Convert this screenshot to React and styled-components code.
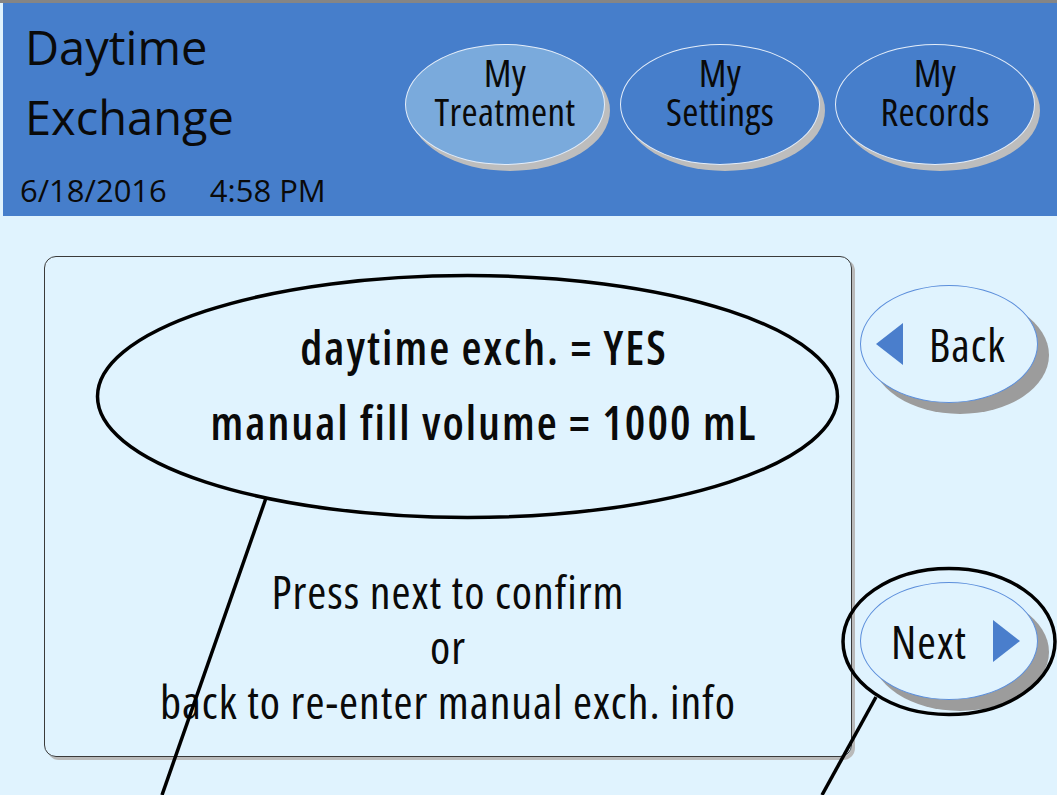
import React from 'react';
import styled, { createGlobalStyle } from 'styled-components';

const GlobalStyle = createGlobalStyle`
  html, body {
    margin: 0;
    padding: 0;
    background: #e0f3fe;
  }
  body {
    font-family: "Open Sans", "Noto Sans", sans-serif;
    font-stretch: 75%;
    color: #0a0a0a;
  }
`;

const Screen = styled.div`
  position: relative;
  width: 1057px;
  height: 795px;
  overflow: hidden;
  box-sizing: border-box;
  border-top: 3px solid #858585;
  background: #e0f3fe;
`;

const Header = styled.header`
  display: flex;
  align-items: flex-start;
  height: 213px;
  margin-left: 3px;
  padding: 0 22px;
  box-sizing: border-box;
  background: #467ecb;
`;

const TitleBlock = styled.div`
  display: flex;
  flex-direction: column;
  padding-top: 9px;
`;

const Title = styled.h1`
  margin: 0;
  font-size: 47px;
  line-height: 70px;
  font-weight: normal;
  font-stretch: 100%;
`;

const DateRow = styled.div`
  display: flex;
  gap: 43px;
  margin-top: 18px;
  margin-left: -5px;
  font-size: 31px;
  line-height: 40px;
  font-stretch: 100%;
`;

const Nav = styled.nav`
  display: flex;
  gap: 15px;
  margin-left: auto;
  padding-top: 41px;
`;

const Tab = styled.div`
  width: 200px;
  height: 121px;
  box-sizing: border-box;
  border-radius: 50%;
  border: 1.5px solid #e4edf9;
  background: ${p => (p.$active ? '#7aaadc' : '#467ecb')};
  box-shadow: 5px 6px 0 #bdbdbd;
  display: flex;
  flex-direction: column;
  align-items: center;
  justify-content: center;
  padding-bottom: 27px;
  font-size: 39px;
  line-height: 39px;
  letter-spacing: 0.3px;
`;

const Main = styled.main`
  display: flex;
  align-items: flex-start;
  padding: 40px 0 0 44px;
`;

const Panel = styled.section`
  width: 808px;
  height: 501px;
  box-sizing: border-box;
  border: 1.5px solid #3a3a3a;
  border-radius: 12px;
  box-shadow: 3px 3px 0 #b9b9b9;
  padding-top: 53px;
  display: flex;
  flex-direction: column;
`;

const Summary = styled.div`
  padding-left: 72px;
  text-align: center;
  font-size: 46px;
  line-height: 75px;
  font-weight: 600;
  letter-spacing: 2px;
`;

const Prompt = styled.div`
  margin-top: 104px;
  text-align: center;
  font-size: 46px;
  line-height: 55px;
  letter-spacing: 1px;
`;

const Side = styled.div`
  display: flex;
  flex-direction: column;
  gap: 179px;
  margin-left: 8px;
  padding-top: 29px;
`;

const StepButton = styled.div`
  width: 178px;
  height: 118px;
  box-sizing: border-box;
  border-radius: 50%;
  border: 1.5px solid #5b8edb;
  background: #e0f3fe;
  box-shadow: 11px 11px 0 #9c9c9c;
  display: flex;
  align-items: center;
  justify-content: center;
  gap: 26px;
  font-size: 45px;
  letter-spacing: 1px;
  padding: ${p => (p.$dir === 'back' ? '0 16px 0 0' : '0 0 0 13px')};
`;

const Overlay = styled.svg`
  position: absolute;
  top: -3px;
  left: 0;
  pointer-events: none;
`;

function Arrow({ dir }) {
  const pts = dir === 'back' ? '27,0 27,42 0,21' : '0,0 0,42 27,21';
  return (
    <svg width="27" height="42" viewBox="0 0 27 42">
      <polygon points={pts} fill="#4a7ecc" />
    </svg>
  );
}

export default function App() {
  return (
    <Screen>
      <GlobalStyle />
      <Header>
        <TitleBlock>
          <Title>
            Daytime
            <br />
            Exchange
          </Title>
          <DateRow>
            <span>6/18/2016</span>
            <span>4:58 PM</span>
          </DateRow>
        </TitleBlock>
        <Nav>
          <Tab $active>
            <span>My</span>
            <span>Treatment</span>
          </Tab>
          <Tab>
            <span>My</span>
            <span>Settings</span>
          </Tab>
          <Tab>
            <span>My</span>
            <span>Records</span>
          </Tab>
        </Nav>
      </Header>

      <Main>
        <Panel>
          <Summary>
            daytime exch. = YES
            <br />
            manual fill volume = 1000 mL
          </Summary>
          <Prompt>
            Press next to confirm
            <br />
            or
            <br />
            back to re-enter manual exch. info
          </Prompt>
        </Panel>
        <Side>
          <StepButton $dir="back">
            <Arrow dir="back" />
            <span>Back</span>
          </StepButton>
          <StepButton $dir="next">
            <span>Next</span>
            <Arrow dir="next" />
          </StepButton>
        </Side>
      </Main>

      {/* callout annotations drawn over the screen */}
      <Overlay width="1057" height="795" viewBox="0 0 1057 795">
        <g fill="none" stroke="#000" strokeWidth="3.5">
          <ellipse cx="467.5" cy="396.5" rx="370" ry="121" />
          <line x1="266" y1="498" x2="162" y2="795" />
          <ellipse cx="949" cy="641.5" rx="106" ry="73" />
          <line x1="876" y1="697" x2="822" y2="795" />
        </g>
      </Overlay>
    </Screen>
  );
}
